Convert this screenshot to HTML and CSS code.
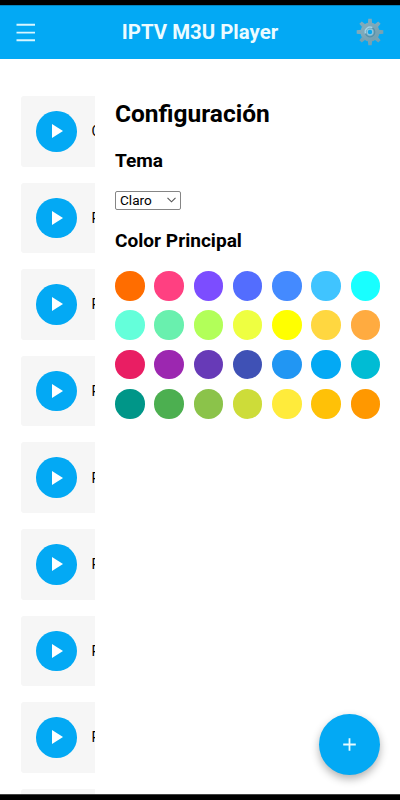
FILE: index.html
```html
<!DOCTYPE html>
<html lang="es">
<head>
<meta charset="utf-8">
<title>IPTV M3U Player</title>
<link rel="stylesheet" href="styles.css">
</head>
<body>
<div class="status"></div>
<header class="bar">
  <svg class="menu" viewBox="0 0 19 19"><path d="M0.5 1.8H19M0.5 9.6H19M0.5 17.2H19"/></svg>
  <h1>IPTV M3U Player</h1>
  <svg class="gear" viewBox="0 0 28 28">
    <defs><linearGradient id="steel" x1="0" y1="0" x2="1" y2="1"><stop offset="0" stop-color="#86afbf"/><stop offset="1" stop-color="#719dae"/></linearGradient></defs>
    <g fill="url(#steel)">
      <circle cx="14" cy="14" r="9.6"/>
      <path d="M11.8 5.5 12.3.7h3.4l.5 4.8zM11.8 22.5l.5 4.8h3.4l.5-4.8zM5.5 11.8.7 12.3v3.4l4.8.5zM22.5 11.8l4.8.5v3.4l-4.8.5z"/>
      <path transform="rotate(45 14 14)" d="M11.8 5.5 12.3.7h3.4l.5 4.8zM11.8 22.5l.5 4.8h3.4l.5-4.8zM5.5 11.8.7 12.3v3.4l4.8.5zM22.5 11.8l4.8.5v3.4l-4.8.5z"/>
    </g>
    <circle cx="14" cy="14" r="4.8" fill="#6fa6bd" stroke="#5790a8" stroke-width="1.2"/>
    <path d="M9.4 15.5a4.9 4.9 0 0 1 7-5.8" fill="none" stroke="#a6d5e8" stroke-width="1.4"/>
    <circle cx="14" cy="14" r="2.8" fill="#08a7ee" stroke="#8fc6dd" stroke-width="1.2"/>
  </svg>
</header>
<main class="content">
  <ul class="channels">
    <li><span class="play"></span>Canal</li>
    <li><span class="play"></span>Play</li>
    <li><span class="play"></span>Play</li>
    <li><span class="play"></span>Play</li>
    <li><span class="play"></span>Play</li>
    <li><span class="play"></span>Play</li>
    <li><span class="play"></span>Play</li>
    <li><span class="play"></span>Play</li>
    <li><span class="play"></span></li>
  </ul>
  <section class="settings">
    <h2>Configuración</h2>
    <h3>Tema</h3>
    <div class="select">Claro<svg viewBox="0 0 9 6"><path d="M.5.8 4.5 4.8 8.5.8"/></svg></div>
    <h3>Color Principal</h3>
    <div class="swatches">
      <i class="c1"></i><i class="c2"></i><i class="c3"></i><i class="c4"></i><i class="c5"></i><i class="c6"></i><i class="c7"></i>
      <i class="c8"></i><i class="c9"></i><i class="c10"></i><i class="c11"></i><i class="c12"></i><i class="c13"></i><i class="c14"></i>
      <i class="c15"></i><i class="c16"></i><i class="c17"></i><i class="c18"></i><i class="c19"></i><i class="c20"></i><i class="c21"></i>
      <i class="c22"></i><i class="c23"></i><i class="c24"></i><i class="c25"></i><i class="c26"></i><i class="c27"></i><i class="c28"></i>
    </div>
  </section>
  <div class="fab"><svg viewBox="0 0 13 13"><path d="M6.5.2v12.6M.2 6.5h12.6"/></svg></div>
</main>
<footer class="navbar"></footer>
</body>
</html>
```
FILE: styles.css
```css
* { box-sizing: border-box; }
body {
  margin: 0;
  height: 800px;
  display: flex;
  flex-direction: column;
  overflow: hidden;
  background: #fff;
  color: #000;
  font-family: Roboto, sans-serif;
}
.status { height: 4.5px; background: #000; flex: none; }
.bar {
  height: 54.5px;
  flex: none;
  display: flex;
  align-items: center;
  justify-content: space-between;
  padding: 0 16px;
  background: #03a9f4;
  border-top: 1px solid #0485c0;
}
.menu { width: 19px; height: 19px; margin-top: 1px; fill: none; stroke: #d8f6ff; stroke-width: 1.9; }
.bar h1 { margin: 0 0 0 9px; font-size: 20.4px; line-height: 24px; font-weight: 700; color: #ecfbff; white-space: nowrap; }
.gear { width: 28px; height: 28px; }
.content { position: relative; flex: 1; min-height: 0; display: flex; overflow: hidden; }
.channels {
  width: 95px;
  flex: none;
  margin: 0;
  padding: 37px 0 0 21px;
  list-style: none;
  overflow: hidden;
}
.channels li {
  width: 358px;
  height: 70.6px;
  margin-bottom: 16px;
  padding-left: 15px;
  display: flex;
  align-items: center;
  background: #f6f6f6;
  border-radius: 3px;
  font-size: 14px;
}
.play {
  width: 40.5px;
  height: 40.5px;
  flex: none;
  margin-right: 15px;
  display: grid;
  place-items: center;
  border-radius: 50%;
  background: #03a9f4;
}
.play::before {
  content: "";
  margin-left: 2px;
  border-left: 11px solid #fff;
  border-top: 7px solid transparent;
  border-bottom: 7px solid transparent;
}
.settings { flex: 1; padding: 40px 20px 0; background: #fff; }
.settings h2 { margin: 0; font-size: 24.5px; line-height: 30px; font-weight: 700; }
.settings h3 { margin: 19.5px 0 0; font-size: 19.1px; line-height: 24px; font-weight: 700; }
.select {
  width: 65.5px;
  height: 19px;
  margin-top: 18px;
  padding: 0 4px;
  display: flex;
  align-items: center;
  justify-content: space-between;
  border: 1px solid #858585;
  border-radius: 2px;
  font-size: 13.6px;
  line-height: 17px;
}
.select svg { width: 9px; height: 6px; fill: none; stroke: #555; stroke-width: 1.1; }
.swatches {
  display: grid;
  grid-template-columns: repeat(7, 29.5px);
  justify-content: space-between;
  row-gap: 9.8px;
  margin-top: 18.2px;
}
.swatches i { height: 29.5px; border-radius: 50%; }
.c1 { background: #ff6d00; } .c2 { background: #ff4081; }
.c3 { background: #7c4dff; } .c4 { background: #536dfe; }
.c5 { background: #448aff; } .c6 { background: #40c4ff; }
.c7 { background: #18ffff; } .c8 { background: #64ffda; }
.c9 { background: #69f0ae; } .c10 { background: #b2ff59; }
.c11 { background: #eeff41; } .c12 { background: #ffff00; }
.c13 { background: #ffd740; } .c14 { background: #ffab40; }
.c15 { background: #e91e63; } .c16 { background: #9c27b0; }
.c17 { background: #673ab7; } .c18 { background: #3f51b5; }
.c19 { background: #2196f3; } .c20 { background: #03a9f4; }
.c21 { background: #00bcd4; } .c22 { background: #009688; }
.c23 { background: #4caf50; } .c24 { background: #8bc34a; }
.c25 { background: #cddc39; } .c26 { background: #ffeb3b; }
.c27 { background: #ffc107; } .c28 { background: #ff9800; }
.fab {
  position: absolute;
  right: 20px;
  bottom: 19.5px;
  width: 61px;
  height: 61px;
  display: grid;
  place-items: center;
  border-radius: 50%;
  background: #03a9f4;
  box-shadow: 0 4px 9px rgba(0, 0, 0, .3);
}
.fab svg { width: 13px; height: 13px; fill: none; stroke: #e8fbff; stroke-width: 1.8; }
.navbar { height: 6px; flex: none; background: #000; border-top: 1px solid #444; }
```
